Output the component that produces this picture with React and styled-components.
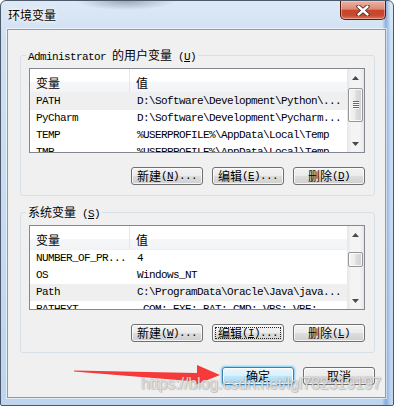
import React from "react";
import styled, { createGlobalStyle, css } from "styled-components";

const GlobalStyle = createGlobalStyle`
  html, body {
    margin: 0;
    padding: 0;
    background: #fff;
  }
  body {
    width: 394px;
    height: 406px;
    overflow: hidden;
    font-family: "Liberation Mono", "Noto Sans CJK SC", monospace;
    font-size: 11px;
    color: #000;
  }
`;

const userVars = [
  { name: "PATH", value: "D:\\Software\\Development\\Python\\...", selected: true },
  { name: "PyCharm", value: "D:\\Software\\Development\\Pycharm..." },
  { name: "TEMP", value: "%USERPROFILE%\\AppData\\Local\\Temp" },
  { name: "TMP", value: "%USERPROFILE%\\AppData\\Local\\Temp" },
];

const systemVars = [
  { name: "NUMBER_OF_PR...", value: "4" },
  { name: "OS", value: "Windows_NT" },
  { name: "Path", value: "C:\\ProgramData\\Oracle\\Java\\java...", selected: true },
  { name: "PATHEXT", value: ".COM;.EXE;.BAT;.CMD;.VBS;.VBE;" },
];

const Window = styled.div`
  position: relative;
  box-sizing: border-box;
  width: 394px;
  height: 406px;
  display: flex;
  flex-direction: column;
  padding: 0 7px 7px 6px;
  border: 1px solid #4a5a6c;
  border-radius: 6px 6px 2px 2px;
  background:
    radial-gradient(ellipse 50px 9px at 125px 0, rgba(80, 90, 105, 0.45), transparent),
    linear-gradient(to right, rgba(255, 255, 255, 0) 97.2%, rgba(105, 155, 215, 0.7) 98.2%, rgba(255, 255, 255, 0) 99.4%),
    linear-gradient(to bottom, #dde9f6 0%, #cfe0f2 10%, #bfd5ed 100%);
  overflow: hidden;
`;

const TitleBar = styled.div`
  height: 28px;
  flex-shrink: 0;
  display: flex;
  align-items: flex-start;
  justify-content: space-between;
`;

const Title = styled.span`
  margin: 6px 0 0 1px;
  font-family: "Noto Sans CJK SC", sans-serif;
  font-size: 12px;
  line-height: 16px;
  text-shadow: 0 0 5px #fff, 0 0 3px #fff;
`;

const CloseButton = styled.div`
  width: 46px;
  height: 19px;
  box-sizing: border-box;
  border: 1px solid #5a1a10;
  border-top: none;
  border-radius: 0 0 5px 5px;
  background: linear-gradient(to bottom, #ebb3a3 0%, #db8b77 45%, #c7452d 52%, #c84a2f 80%, #d9775d 100%);
  box-shadow: inset 0 0 0 1px rgba(255, 220, 210, 0.45);
  display: flex;
  align-items: center;
  justify-content: center;
`;

const Client = styled.div`
  flex: 1;
  display: flex;
  flex-direction: column;
  box-sizing: border-box;
  border: 1px solid #8e9bab;
  background: #f0f0f0;
  padding: 0 10px 0 12px;
  box-shadow: 0 0 0 1px rgba(255, 255, 255, 0.55);
`;

const Group = styled.fieldset`
  margin: ${(p) => p.$top}px 0 0 0;
  padding: 6px 9px 10px 8px;
  border: 1px solid #d5dfe5;
  border-radius: 3px;
  min-width: 0;
  display: flex;
  flex-direction: column;
`;

const Legend = styled.legend`
  margin-left: -3px;
  padding: 0 2px;
  height: 14px;
  line-height: 14px;
  white-space: nowrap;
`;

const Mono = styled.span`
  font-family: "Liberation Mono", monospace;
  font-size: 11px;
  letter-spacing: -0.6px;
`;

const Cjk = styled.span`
  font-family: "Noto Sans CJK SC", sans-serif;
  font-size: 12px;
  letter-spacing: 0;
`;

const ListBox = styled.div`
  display: flex;
  height: 85px;
  box-sizing: border-box;
  border: 1px solid #828790;
  background: #fff;
  overflow: hidden;
`;

const Table = styled.div`
  flex: 1;
  min-width: 0;
  display: flex;
  flex-direction: column;
  overflow: hidden;
`;

const HeaderRow = styled.div`
  flex-shrink: 0;
  display: grid;
  grid-template-columns: 100px 1fr;
  height: 24px;
  background: linear-gradient(to bottom, #fff 0%, #fff 55%, #f6f7f9 56%, #f3f4f6 100%);
  border-bottom: 1px solid #eef0f3;
  box-sizing: border-box;
`;

const HeaderCell = styled.div`
  display: flex;
  align-items: center;
  padding: 3px 0 0 6px;
  border-right: ${(p) => (p.$divider ? "1px solid #e3e6ea" : "none")};
`;

const Row = styled.div`
  flex-shrink: 0;
  display: grid;
  grid-template-columns: 100px 1fr;
  height: 17px;
  align-items: center;
  white-space: nowrap;
  background: ${(p) => (p.$selected ? "#efefef" : "transparent")};
`;

const Cell = styled.span`
  overflow: hidden;
  padding-left: ${(p) => p.$pad}px;
  letter-spacing: -0.6px;
  line-height: 17px;
`;

const ScrollBar = styled.div`
  width: 17px;
  flex-shrink: 0;
  display: flex;
  flex-direction: column;
  background: linear-gradient(to right, #e6e6e6, #f4f4f4 25%, #f4f4f4 75%, #e6e6e6);
`;

const ArrowBox = styled.div`
  height: 17px;
  flex-shrink: 0;
  display: flex;
  align-items: center;
  justify-content: center;
`;

const Track = styled.div`
  flex: 1;
  display: flex;
  flex-direction: column;
`;

const Thumb = styled.div`
  margin: 0 1px;
  box-sizing: border-box;
  border: 1px solid #959595;
  border-radius: 2px;
  background: linear-gradient(to right, #f5f5f5, #ececec 45%, #dcdcdc 55%, #d2d2d2);
  box-shadow: inset 0 0 0 1px rgba(255, 255, 255, 0.8);
  display: flex;
  align-items: center;
  justify-content: center;
`;

const Grip = styled.div`
  width: 6px;
  height: 8px;
  background: repeating-linear-gradient(to bottom, #6a6a6a 0, #6a6a6a 1px, #fafafa 1px, #fafafa 2px);
`;

const ButtonRow = styled.div`
  display: flex;
  justify-content: flex-end;
  gap: 9px;
  margin-top: ${(p) => p.$top}px;
`;

const Button = styled.div`
  position: relative;
  width: 72px;
  height: 18px;
  box-sizing: border-box;
  border: 1px solid #707070;
  border-radius: 3px;
  background: linear-gradient(to bottom, #f3f3f3 0%, #ebebeb 48%, #dddddd 52%, #cfcfcf 100%);
  box-shadow: inset 0 0 0 1px rgba(255, 255, 255, 0.75);
  display: flex;
  align-items: center;
  justify-content: center;
  line-height: 14px;
  white-space: nowrap;
  ${(p) =>
    p.$default &&
    css`
      border-color: #3c7fb1;
      background: linear-gradient(to bottom, #eaf6fd 0%, #d9f0fc 48%, #bee6fd 52%, #a7d9f5 100%);
      box-shadow: inset 0 0 0 1px #fff, 0 0 2px 1px rgba(70, 190, 245, 0.7);
    `}
  ${(p) =>
    p.$focused &&
    css`
      &::after {
        content: "";
        position: absolute;
        inset: 2px;
        border: 1px dotted #222;
      }
    `}
`;

const ActionRow = styled.div`
  display: flex;
  justify-content: flex-end;
  gap: 9px;
  margin-top: 14px;
`;

const ArrowMark = styled.svg`
  position: absolute;
  left: 71px;
  top: 362px;
  pointer-events: none;
`;

const Watermark = styled.div`
  position: absolute;
  left: 140px;
  top: 374px;
  font-family: "Liberation Sans", Arial, sans-serif;
  font-size: 16px;
  line-height: 18px;
  letter-spacing: -0.1px;
  color: rgba(238, 238, 238, 0.85);
  text-shadow: 0 0 1px rgba(80, 80, 80, 0.55), 1px 1px 1px rgba(120, 120, 120, 0.35);
  pointer-events: none;
  white-space: nowrap;
`;

const Triangle = ({ down }) => (
  <svg width="7" height="4" viewBox="0 0 7 4">
    <polygon points={down ? "0,0 7,0 3.5,4" : "3.5,0 7,4 0,4"} fill="#4a4a4a" />
  </svg>
);

const Label = ({ cjk, hotkey, dots }) => (
  <>
    <Cjk>{cjk}</Cjk>
    <Mono>
      {"("}
      <u>{hotkey}</u>
      {")"}
      {dots ? "..." : ""}
    </Mono>
  </>
);

const VarList = ({ rows, thumbTop, thumbHeight }) => (
  <ListBox>
    <Table>
      <HeaderRow>
        <HeaderCell $divider>
          <Cjk>变量</Cjk>
        </HeaderCell>
        <HeaderCell>
          <Cjk>值</Cjk>
        </HeaderCell>
      </HeaderRow>
      {rows.map((r) => (
        <Row key={r.name} $selected={r.selected}>
          <Cell $pad={6}>{r.name}</Cell>
          <Cell $pad={7}>{r.value}</Cell>
        </Row>
      ))}
    </Table>
    <ScrollBar>
      <ArrowBox>
        <Triangle />
      </ArrowBox>
      <Track>
        <Thumb style={{ marginTop: thumbTop, height: thumbHeight }}>
          {thumbHeight > 20 && <Grip />}
        </Thumb>
      </Track>
      <ArrowBox>
        <Triangle down />
      </ArrowBox>
    </ScrollBar>
  </ListBox>
);

export default function App() {
  return (
    <>
      <GlobalStyle />
      <Window>
        <TitleBar>
          <Title>环境变量</Title>
          <CloseButton>
            <svg width="14" height="11" viewBox="0 0 14 11">
              <path d="M2.5 1.5 L11.5 9.5 M11.5 1.5 L2.5 9.5" stroke="#4a2a22" strokeWidth="4.2" strokeLinecap="round" />
              <path d="M2.5 1.5 L11.5 9.5 M11.5 1.5 L2.5 9.5" stroke="#fff" strokeWidth="2.4" strokeLinecap="round" />
            </svg>
          </CloseButton>
        </TitleBar>
        <Client>
          <Group $top={18}>
            <Legend>
              <Mono>Administrator </Mono>
              <Cjk>的用户变量</Cjk>
              <Mono>
                {" ("}
                <u>U</u>
                {")"}
              </Mono>
            </Legend>
            <VarList rows={userVars} thumbTop={2} thumbHeight={34} />
            <ButtonRow $top={14}>
              <Button>
                <Label cjk="新建" hotkey="N" dots />
              </Button>
              <Button>
                <Label cjk="编辑" hotkey="E" dots />
              </Button>
              <Button>
                <Label cjk="删除" hotkey="D" />
              </Button>
            </ButtonRow>
          </Group>
          <Group $top={9}>
            <Legend>
              <Cjk>系统变量</Cjk>
              <Mono>
                {" ("}
                <u>S</u>
                {")"}
              </Mono>
            </Legend>
            <VarList rows={systemVars} thumbTop={9} thumbHeight={15} />
            <ButtonRow $top={14}>
              <Button>
                <Label cjk="新建" hotkey="W" dots />
              </Button>
              <Button $focused>
                <Label cjk="编辑" hotkey="I" dots />
              </Button>
              <Button>
                <Label cjk="删除" hotkey="L" />
              </Button>
            </ButtonRow>
          </Group>
          <ActionRow>
            <Button $default>
              <Cjk>确定</Cjk>
            </Button>
            <Button>
              <Cjk>取消</Cjk>
            </Button>
          </ActionRow>
        </Client>
        <ArrowMark width="152" height="26" viewBox="0 0 152 26">
          <polygon
            points="2,7.5 125,10 125,2 148,12 123,22 124,18.5 2,8.6"
            fill="#f63a3a"
          />
        </ArrowMark>
        <Watermark>https://blog.csdn.net/lgl782519197</Watermark>
      </Window>
    </>
  );
}
